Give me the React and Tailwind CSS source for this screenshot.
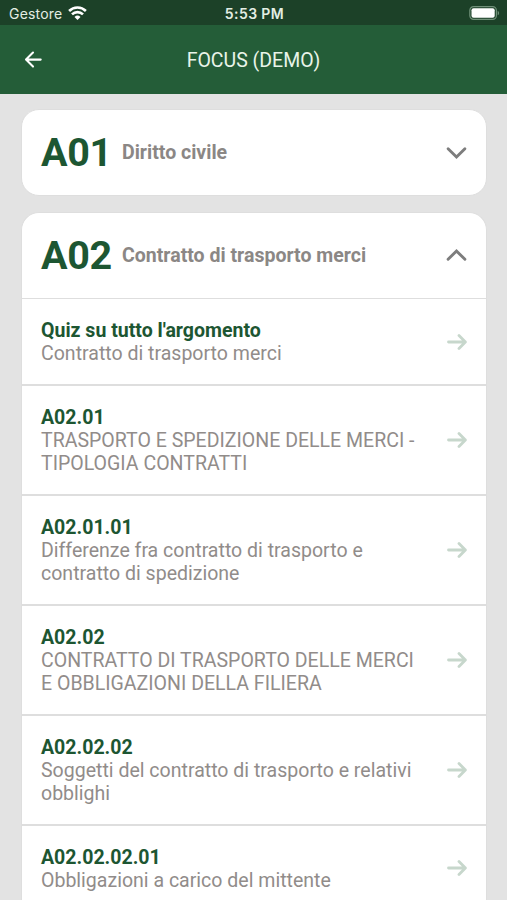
import React from "react";

const topics = [
  { title: "Quiz su tutto l'argomento", lines: ["Contratto di trasporto merci"] },
  { title: "A02.01", lines: ["TRASPORTO E SPEDIZIONE DELLE MERCI -", "TIPOLOGIA CONTRATTI"] },
  { title: "A02.01.01", lines: ["Differenze fra contratto di trasporto e", "contratto di spedizione"] },
  { title: "A02.02", lines: ["CONTRATTO DI TRASPORTO DELLE MERCI", "E OBBLIGAZIONI DELLA FILIERA"] },
  { title: "A02.02.02", lines: ["Soggetti del contratto di trasporto e relativi", "obblighi"] },
  { title: "A02.02.02.01", lines: ["Obbligazioni a carico del mittente"] },
];

const StatusBar = () => (
  <div className="grid h-[25px] shrink-0 grid-cols-3 items-center bg-[#1c4128] pt-[3px] pr-[7px] pl-[9px] font-['Inter',sans-serif] text-[14px] leading-none text-[#e3eee4]">
    <div className="flex items-center gap-[6px]">
      <span className="tracking-[0.2px]">Gestore</span>
      <svg className="-mt-[2px] h-[14px] w-[19px]" viewBox="0 0 19 14" fill="none" stroke="white" strokeWidth="2.6">
        <path d="M1.1 5a12 12 0 0 1 16.8 0" />
        <path d="M4 8.4a7.8 7.8 0 0 1 11 0" />
        <path d="M6.5 11a4.3 4.3 0 0 1 6 0L9.5 14z" fill="white" stroke="none" />
      </svg>
    </div>
    <span className="text-center font-semibold tracking-[0.4px] whitespace-nowrap">5:53 PM</span>
    <svg className="-mt-[2px] h-[14px] w-[31px] justify-self-end" viewBox="0 0 31 14" fill="none">
      <rect x="0.8" y="0.6" width="26.6" height="12.8" rx="3.8" stroke="#6f9078" strokeWidth="1.2" />
      <rect x="2.5" y="2.3" width="23.2" height="9.4" rx="2" fill="white" />
      <path d="M28.7 4.7c1.9.8 1.9 3.8 0 4.6z" fill="#6f9078" />
    </svg>
  </div>
);

const Header = () => (
  <header className="grid h-[69px] shrink-0 grid-cols-[66px_1fr_66px] items-center bg-[#245d38] text-[#e9f4e9]">
    <svg className="ml-[24px] h-[18px] w-[18px]" viewBox="0 0 18 18" fill="none" stroke="white" strokeWidth="2.1" strokeLinecap="round" strokeLinejoin="round">
      <path d="M16.7 8.6H2M9 1.6 2 8.6l7 7" />
    </svg>
    <h1 className="pt-[2px] text-center text-[19.5px] leading-none">FOCUS (DEMO)</h1>
  </header>
);

const SectionHead = ({ code, title, open = false }) => (
  <div className={open ? "flex h-[85px] items-center px-[19px]" : "flex h-[85px] items-center px-[19px] pt-[1px]"}>
    <span className="w-[81px] text-[39.5px] leading-none font-bold tracking-[-0.4px] text-[#1d5632]">{code}</span>
    <span className="flex-1 text-[19.55px] leading-none font-bold text-[#8b8785]">{title}</span>
    <svg className={open ? "mb-[2px] h-[14px] w-[21px]" : "mb-[1px] h-[14px] w-[21px]"} viewBox="0 0 21 14" fill="none" stroke="#7d7d7d" strokeWidth="2.9" strokeLinecap="round" strokeLinejoin="miter">
      <path d={open ? "M2.1 11.3 10.5 3 18.9 11.3" : "M2.1 2.7 10.5 11 18.9 2.7"} />
    </svg>
  </div>
);

const TopicRow = ({ title, lines }) => (
  <div className="flex items-center justify-between border-t-2 border-[#dedede] px-[19px] pt-[20px] pb-[18px] text-[19.55px] leading-[23.333px] first-of-type:border-t">
    <div className="whitespace-nowrap">
      <h2 className="font-bold text-[#1d5632]">{title}</h2>
      {lines.map((line) => (
        <p key={line} className="text-[#918c8a]">{line}</p>
      ))}
    </div>
    <svg className="mb-[1px] h-[16px] w-[20px] shrink-0" viewBox="0 0 20 16" fill="none" stroke="#c7d7cc" strokeWidth="2.8" strokeLinecap="round" strokeLinejoin="round">
      <path d="M1.5 8H18.3M12 1.6 18.4 8 12 14.4" />
    </svg>
  </div>
);

const App = () => (
  <div className="flex h-screen flex-col overflow-hidden bg-[#e3e3e3] font-['Roboto',sans-serif]">
    <StatusBar />
    <Header />
    <main className="flex flex-col gap-4 pt-[15px] pr-[20px] pl-[21px]">
      <section className="rounded-[18px] border border-[#dedede] bg-white">
        <SectionHead code="A01" title="Diritto civile" />
      </section>
      <section className="rounded-t-[18px] border border-b-0 border-[#dedede] bg-white">
        <SectionHead code="A02" title="Contratto di trasporto merci" open />
        <div>
          {topics.map((topic) => (
            <TopicRow key={topic.title} {...topic} />
          ))}
        </div>
      </section>
    </main>
  </div>
);

export default App;
